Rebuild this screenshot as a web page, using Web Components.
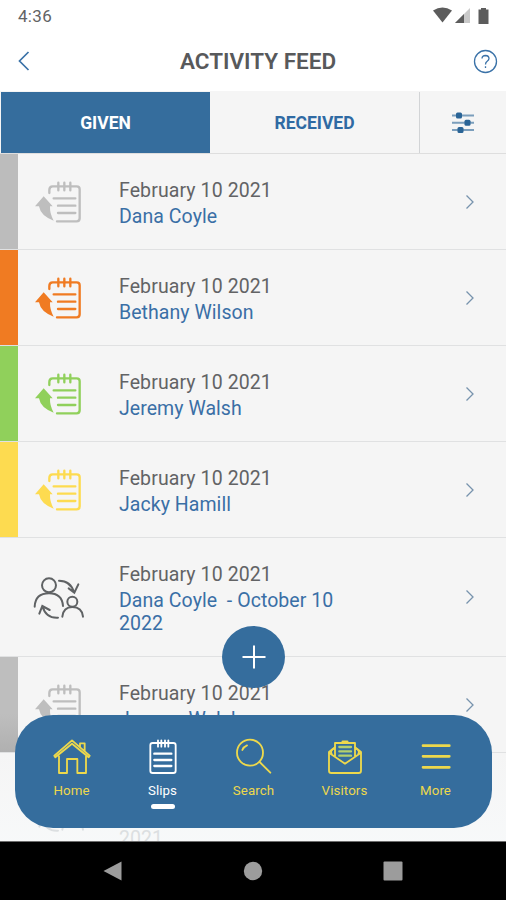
<!DOCTYPE html>
<html lang="en">
<head>
<meta charset="utf-8">
<title>Activity Feed</title>
<style>
    body {
        margin: 0;
        font-family: Roboto, "Liberation Sans", sans-serif;
        color: #626365;
    }
</style>
</head>
<body>
<activity-app>
    <status-bar slot="top" time="4:36"></status-bar>
    <page-header slot="top">ACTIVITY FEED</page-header>
    <tab-bar slot="top">
        <span slot="first">GIVEN</span>
        <span slot="second">RECEIVED</span>
    </tab-bar>

    <feed-row date="February 10 2021" color="#bcbcbc" ink="#bebebe">Dana Coyle</feed-row>
    <feed-row date="February 10 2021" color="#f07b22">Bethany Wilson</feed-row>
    <feed-row date="February 10 2021" color="#90d05b">Jeremy Walsh</feed-row>
    <feed-row date="February 10 2021" color="#fddb50">Jacky Hamill</feed-row>
    <feed-row date="February 10 2021" icon="people">Dana Coyle&nbsp; - October 10 2022</feed-row>
    <feed-row date="February 10 2021" color="linear-gradient(#bebebe 60%, #b0b0b0)" ink="#bebebe">Jeremy Walsh</feed-row>
    <feed-row date="" icon="people" faded><br>2021</feed-row>

    <add-button slot="overlay"></add-button>
    <bottom-nav slot="overlay">
        <nav-item icon="home">Home</nav-item>
        <nav-item icon="slips" active>Slips</nav-item>
        <nav-item icon="search">Search</nav-item>
        <nav-item icon="visitors">Visitors</nav-item>
        <nav-item icon="more">More</nav-item>
    </bottom-nav>
    <system-bar slot="bottom"></system-bar>
</activity-app>

<script>
const rowIcons = {
    slip: `
        <svg width="48" height="44" viewBox="102 90 144 132" fill="none" stroke="currentColor" stroke-width="7" stroke-linecap="round">
            <path d="M148 129V120Q148 109 158 109H230Q239 109 239 118V205Q239 214 230 214H171"/>
            <path d="M175 98V121M193 98V121M211 98V121M161 145H226M174 167H226M174 189H226"/>
            <path d="M131 139L158 169H150Q149 191 161 212Q122 198 117 169H105Z" fill="currentColor" stroke="none"/>
        </svg>`,
    people: `
        <svg width="52" height="44" viewBox="99 135 156 132" fill="none" stroke="currentColor" stroke-width="6" stroke-linecap="round">
            <circle cx="147" cy="163" r="21"/>
            <path d="M104 227Q106 187 147 187Q186 187 189 225"/>
            <circle cx="217" cy="212" r="15"/>
            <path d="M187 257Q190 228 217 228Q246 228 249 257"/>
            <path d="M177 149Q212 149 222 184M206 172L223 185L235 160"/>
            <path d="M174 260Q138 262 128 227M118 248L127 225L149 237"/>
        </svg>`
};

const navIcons = {
    home: `<path d="M177 170V220H201V178H232V220H258V170M163 168L216 122L269 168L266 173L216 132L166 173ZM240 141V131H254V153"/>`,
    slips: `<path d="M458 130H520Q527 130 527 137V213Q527 220 520 220H458Q451 220 451 213V137Q451 130 458 130ZM474 122V141M484 122V141M495 122V141M505 122V141"/>
            <path d="M463 162H514M463 181H514M463 199H514" stroke-width="7"/>`,
    search: `<circle cx="750" cy="159" r="39"/><path d="M779 187L811 219M727 151Q731 141 741 137"/>`,
    visitors: `<path d="M245 143L227 157V213Q227 220 234 220H316Q323 220 323 213V157L305 143"/>
            <path d="M228 160L275 192L322 160M245 170V130H305V170M245 145Q229 151 235 163M305 145Q321 151 315 163"/>
            <path d="M268 126H282" stroke-width="7"/>
            <path d="M258 142H293M258 155H293M258 168H293" stroke="#b4d06c" stroke-width="7"/>`,
    more: `<path d="M510 138H589M510 170H589M510 203H589" stroke-width="8"/>`
};

const navBoxes = {
    home: '156 112 120 120',
    slips: '429 112 120 120',
    search: '702 112 120 120',
    visitors: '215 112 120 120',
    more: '489 112 120 120'
};

class ActivityApp extends HTMLElement {
    constructor() {
        super();
        this.attachShadow({ mode: 'open' });
    }

    connectedCallback() {
        this.shadowRoot.innerHTML = `
        <style>
            :host {
                position: relative;
                display: flex;
                flex-direction: column;
                height: 900px;
                overflow: hidden;
                background: #fff;
            }
            .feed {
                flex: 1;
                min-height: 0;
                overflow: hidden;
                background: #f5f5f5;
            }
        </style>
        <slot name="top"></slot>
        <div class="feed"><slot></slot></div>
        <slot name="bottom"></slot>
        <slot name="overlay"></slot>
        `;
    }
}

class StatusBar extends HTMLElement {
    constructor() {
        super();
        this.attachShadow({ mode: 'open' });
    }

    connectedCallback() {
        this.shadowRoot.innerHTML = `
        <style>
            :host {
                display: flex;
                justify-content: space-between;
                align-items: center;
                height: 32px;
                padding: 0 15px 0 18px;
                box-sizing: border-box;
                font-size: 17px;
                letter-spacing: 0.3px;
            }
        </style>
        <span>${this.getAttribute('time')}</span>
        <svg width="58" height="18" viewBox="0 0 58 18" fill="#5c5c5c">
            <path d="M0 3.500Q9.500 -2.500 19 3.500L9.500 15.500Z"/>
            <path d="M22 16L37 1V16Z" fill="#c9c9c9"/>
            <path d="M22 16L31 7V16Z"/>
            <path d="M48 1H53V2.500H55.500V17H45.500V2.500H48Z"/>
        </svg>
        `;
    }
}

class PageHeader extends HTMLElement {
    constructor() {
        super();
        this.attachShadow({ mode: 'open' });
    }

    connectedCallback() {
        this.shadowRoot.innerHTML = `
        <style>
            :host {
                display: grid;
                grid-template-columns: 31px 1fr 30px;
                align-items: center;
                height: 59px;
                padding: 0 3px 0 12px;
                box-sizing: border-box;
                color: #3a72a8;
            }
            h1 {
                margin: 0;
                padding-bottom: 1px;
                text-align: center;
                font-size: 22.5px;
                font-weight: 600;
                color: #58595b;
            }
            svg { display: block; }
        </style>
        <svg width="24" height="24" viewBox="0 0 24 24" fill="none" stroke="currentColor" stroke-width="1.7"><path d="M16.500 2L7.500 11L16.500 20"/></svg>
        <h1><slot></slot></h1>
        <svg width="26" height="26" viewBox="0 0 26 26" fill="none" stroke="currentColor" stroke-width="1.3">
            <circle cx="12.500" cy="12.500" r="11"/>
            <path d="M9 9.500Q9.200 6.500 12.500 6.500Q16 6.700 16 9.500Q16 11 14.200 12.200Q12.500 13.300 12.500 15.500M12.500 17.300V19"/>
        </svg>
        `;
    }
}

class TabBar extends HTMLElement {
    constructor() {
        super();
        this.attachShadow({ mode: 'open' });
    }

    connectedCallback() {
        this.shadowRoot.innerHTML = `
        <style>
            :host {
                display: grid;
                grid-template-columns: 209px 1fr 86px;
                height: 63px;
                padding: 1px 1px 0;
                box-sizing: border-box;
                background: #f5f5f5;
                border-bottom: 1px solid #dedede;
                font-size: 17.5px;
                font-weight: 700;
                color: #2f6aa3;
            }
            div {
                display: flex;
                align-items: center;
                justify-content: center;
                padding-top: 1px;
            }
            .on { background: #356d9d; color: #fff; }
            .filter { border-left: 1px solid #d2d4d6; }
        </style>
        <div class="on"><slot name="first"></slot></div>
        <div><slot name="second"></slot></div>
        <div class="filter">
            <svg width="22" height="22" viewBox="0 0 22 22" fill="#2a6496">
                <path d="M0 2.500H22V4.500H0ZM0 9.800H22V11.800H0ZM0 17H22V19H0Z" opacity="0.6"/>
                <rect x="4" y="0.500" width="6" height="6" rx="1.500"/>
                <rect x="12.500" y="7.800" width="6" height="6" rx="1.500"/>
                <rect x="5.500" y="15" width="6" height="6" rx="1.500"/>
            </svg>
        </div>
        `;
    }
}

class FeedRow extends HTMLElement {
    constructor() {
        super();
        this.attachShadow({ mode: 'open' });
    }

    connectedCallback() {
        const date = this.getAttribute('date');
        const color = this.getAttribute('color') || 'transparent';
        const ink = this.getAttribute('ink') || this.getAttribute('color') || '#5f6264';
        const icon = rowIcons[this.getAttribute('icon') || 'slip'];

        this.shadowRoot.innerHTML = `
        <style>
            :host {
                display: grid;
                grid-template-columns: 18px 101px 240px 1fr;
                min-height: 96px;
                box-sizing: border-box;
                border-bottom: 1px solid #e0e1e2;
            }
            :host([icon="people"]) { min-height: 119px; }
            .bar { background: ${color}; }
            .icon {
                display: flex;
                align-items: center;
                box-sizing: border-box;
                padding: 1px 0 0 16px;
                color: ${ink};
            }
            :host([icon="people"]) .icon { padding-left: 15px; }
            .text { padding-top: 25px; }
            .date {
                height: 24px;
                line-height: 24px;
                font-size: 19.5px;
                letter-spacing: 0.1px;
            }
            .name {
                margin-top: 2px;
                line-height: 23px;
                font-size: 19.5px;
                letter-spacing: 0.05px;
                color: #3a6fa6;
            }
            .go {
                display: flex;
                align-items: center;
                padding-left: 105px;
            }
            :host([faded]) { background: linear-gradient(#f5f5f5, #f8fafb); }
            :host([faded]) .name { color: #dcdfe1; }
            :host([faded]) .icon { color: #dcdfe1; padding-bottom: 3px; }
        </style>
        <div class="bar"></div>
        <div class="icon">${icon}</div>
        <div class="text">
            <div class="date">${date}</div>
            <div class="name"><slot></slot></div>
        </div>
        <div class="go">
            <svg width="12" height="16" viewBox="0 0 12 16" fill="none" stroke="#7793ad" stroke-width="1.3"><path d="M2.500 1.500L9 8L2.500 14.500"/></svg>
        </div>
        `;
    }
}

class AddButton extends HTMLElement {
    constructor() {
        super();
        this.attachShadow({ mode: 'open' });
    }

    connectedCallback() {
        this.shadowRoot.innerHTML = `
        <style>
            :host {
                position: absolute;
                left: 222px;
                top: 626px;
                display: flex;
                align-items: center;
                justify-content: center;
                width: 63px;
                height: 62px;
                border-radius: 50%;
                background: #356d9d;
            }
        </style>
        <svg width="24" height="24" viewBox="0 0 24 24" stroke="#fff" stroke-width="2"><path d="M12 0.500V23.500M0.500 12H23.500"/></svg>
        `;
    }
}

class BottomNav extends HTMLElement {
    constructor() {
        super();
        this.attachShadow({ mode: 'open' });
    }

    connectedCallback() {
        this.shadowRoot.innerHTML = `
        <style>
            :host {
                position: absolute;
                left: 15px;
                top: 715px;
                display: grid;
                grid-template-columns: repeat(5, 91px);
                justify-content: center;
                width: 477px;
                height: 113px;
                border-radius: 38px;
                background: #356d9d;
            }
        </style>
        <slot></slot>
        `;
    }
}

class NavItem extends HTMLElement {
    constructor() {
        super();
        this.attachShadow({ mode: 'open' });
    }

    connectedCallback() {
        const icon = this.getAttribute('icon');

        this.shadowRoot.innerHTML = `
        <style>
            :host {
                display: flex;
                flex-direction: column;
                align-items: center;
                padding-top: 22px;
                color: #edd84c;
                font-size: 13.3px;
                letter-spacing: 0.1px;
            }
            :host([active]) { color: #fff; }
            .label { margin-top: 5.5px; line-height: 16px; }
            .mark {
                width: 24px;
                height: 5px;
                margin-top: 5.5px;
                border-radius: 3px;
            }
            :host([active]) .mark { background: #fff; }
        </style>
        <svg width="40" height="40" viewBox="${navBoxes[icon]}" fill="none" stroke="currentColor" stroke-width="5.5" stroke-linecap="round" stroke-linejoin="round">${navIcons[icon]}</svg>
        <span class="label"><slot></slot></span>
        <div class="mark"></div>
        `;
    }
}

class SystemBar extends HTMLElement {
    constructor() {
        super();
        this.attachShadow({ mode: 'open' });
    }

    connectedCallback() {
        this.shadowRoot.innerHTML = `
        <style>
            :host {
                display: grid;
                grid-template-columns: repeat(3, 140px);
                justify-content: center;
                justify-items: center;
                align-items: center;
                height: 59px;
                box-sizing: border-box;
                border-top: 1px solid #6d6d6d;
                background: #000;
            }
        </style>
        <svg width="20" height="20" viewBox="0 0 20 20" fill="#9c9c9c"><path d="M0.500 10L18.500 0.500V19.500Z"/></svg>
        <svg width="20" height="20" viewBox="0 0 20 20" fill="#9c9c9c"><circle cx="10" cy="10" r="9.200"/></svg>
        <svg width="20" height="20" viewBox="0 0 20 20" fill="#9c9c9c"><rect x="0.500" y="0.500" width="19" height="19" rx="1"/></svg>
        `;
    }
}

customElements.define('status-bar', StatusBar);
customElements.define('page-header', PageHeader);
customElements.define('tab-bar', TabBar);
customElements.define('feed-row', FeedRow);
customElements.define('add-button', AddButton);
customElements.define('nav-item', NavItem);
customElements.define('bottom-nav', BottomNav);
customElements.define('system-bar', SystemBar);
customElements.define('activity-app', ActivityApp);
</script>
</body>
</html>
